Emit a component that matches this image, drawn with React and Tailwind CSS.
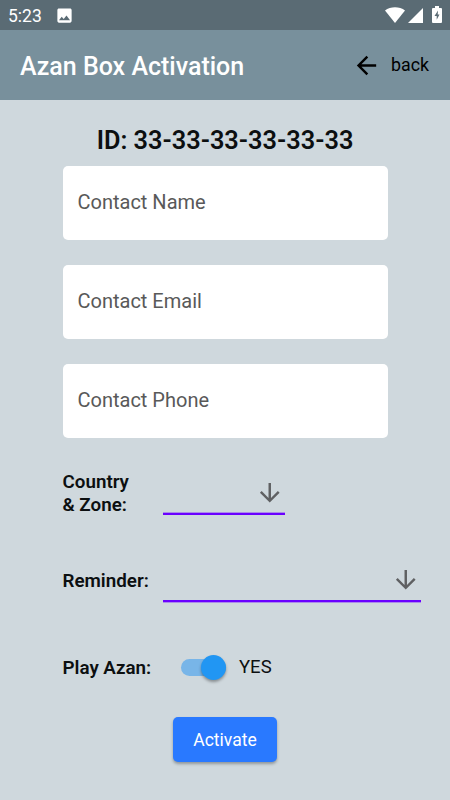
import React, { useState } from "react";
import { MdArrowBack, MdArrowDownward, MdImage } from "react-icons/md";

const contactFields = ["Contact Name", "Contact Email", "Contact Phone"];

const StatusBar = () => (
  <div className="h-[30px] bg-[#5a6b74] flex items-center justify-between pl-2 pr-[8px] text-white">
    <div className="flex items-center">
      <span className="pt-px text-[17.5px] leading-[30px]">5:23</span>
      <MdImage className="ml-[13px] size-[19px]" />
    </div>
    <div className="flex items-center">
      <svg width="20" height="16" viewBox="0 0 20 16" fill="currentColor">
        <path d="M0 3.6C5.5-.8 14.5-.8 20 3.6L10 16z" />
      </svg>
      <svg className="ml-[3px]" width="15" height="15" viewBox="0 0 15 15" fill="currentColor">
        <path d="M15 0v15H0z" />
      </svg>
      <svg className="ml-[9px] mb-px" width="10" height="17" viewBox="0 0 10 17">
        <path
          fill="currentColor"
          d="M3 0h4v2h2a1 1 0 0 1 1 1v13a1 1 0 0 1-1 1H1a1 1 0 0 1-1-1V3a1 1 0 0 1 1-1h2z"
        />
        <path fill="#5a6b74" d="M6 4.5L2.5 10h2.2v3.7L7.5 8.6H5.7z" />
      </svg>
    </div>
  </div>
);

const SelectLine = ({ className }) => (
  <button
    className={`h-[45px] border-b-2 border-[#6a00ff] flex items-center justify-end pt-[2px] pr-px ${className}`}
  >
    <MdArrowDownward className="size-[29.5px] text-[#5f6062]" />
  </button>
);

const App = () => {
  const [playAzan, setPlayAzan] = useState(true);

  return (
    <div className="w-[450px] h-[800px] overflow-hidden bg-[#cfd8dd] font-[Roboto,sans-serif] text-[#0c0f10]">
      <StatusBar />
      <header className="h-[70px] bg-[#78909c] flex items-center justify-between pl-5 pr-[21px]">
        <h1 className="pt-[3px] text-[25px] leading-[30px] font-medium text-white">
          Azan Box Activation
        </h1>
        <button className="flex items-center gap-[10px] text-[17.8px] text-black">
          <MdArrowBack className="size-[29px]" />
          <span className="pt-px">back</span>
        </button>
      </header>

      <main className="pt-[26px] pl-[62.5px]">
        <h2 className="w-[325px] text-center text-[25.3px] leading-[30px] font-semibold">
          ID: 33-33-33-33-33-33
        </h2>

        <div className="mt-[10px] w-[325px] flex flex-col gap-[25px]">
          {contactFields.map((field) => (
            <input
              key={field}
              placeholder={field}
              className="h-[74px] w-full rounded-[5px] bg-white pb-[3px] pl-[15px] text-[20px] placeholder:text-[#595959]"
            />
          ))}
        </div>

        <div className="mt-[32px] h-[45px] flex items-center">
          <span className="w-[100px] pt-[3px] text-[18.8px] leading-[23px] font-semibold">
            Country
            <br />& Zone:
          </span>
          <SelectLine className="w-[122.5px] shadow-[inset_0_-1px_0_rgba(106,0,255,0.35)]" />
        </div>

        <div className="mt-[42px] h-[45px] flex items-center">
          <span className="w-[100px] pt-[4px] text-[18.8px] leading-[23px] font-semibold">
            Reminder:
          </span>
          <SelectLine className="w-[258.5px] shadow-[0_1px_0_rgba(106,0,255,0.35)]" />
        </div>

        <div className="mt-[43px] h-[45px] flex items-center">
          <span className="w-[118.5px] pt-[2px] text-[18.8px] leading-[23px] font-semibold">
            Play Azan:
          </span>
          <button
            onClick={() => setPlayAzan(!playAzan)}
            className={`h-[17px] w-[45px] rounded-full bg-[#78b5e8] flex items-center ${
              playAzan ? "justify-end" : "justify-start"
            }`}
          >
            <span className="size-[25px] shrink-0 rounded-full bg-[#2196f3] shadow-[0_2px_3px_rgba(0,0,0,0.35)]" />
          </button>
          <span className="ml-[13px] pt-px text-[18.5px]">{playAzan ? "YES" : "NO"}</span>
        </div>

        <button className="mt-[27px] ml-[110.5px] h-[45px] w-[104px] rounded-[5px] bg-[#2979ff] pt-[2px] text-[17.5px] text-white shadow-[0_2px_3px_rgba(0,0,0,0.3)]">
          Activate
        </button>
      </main>
    </div>
  );
};

export default App;
